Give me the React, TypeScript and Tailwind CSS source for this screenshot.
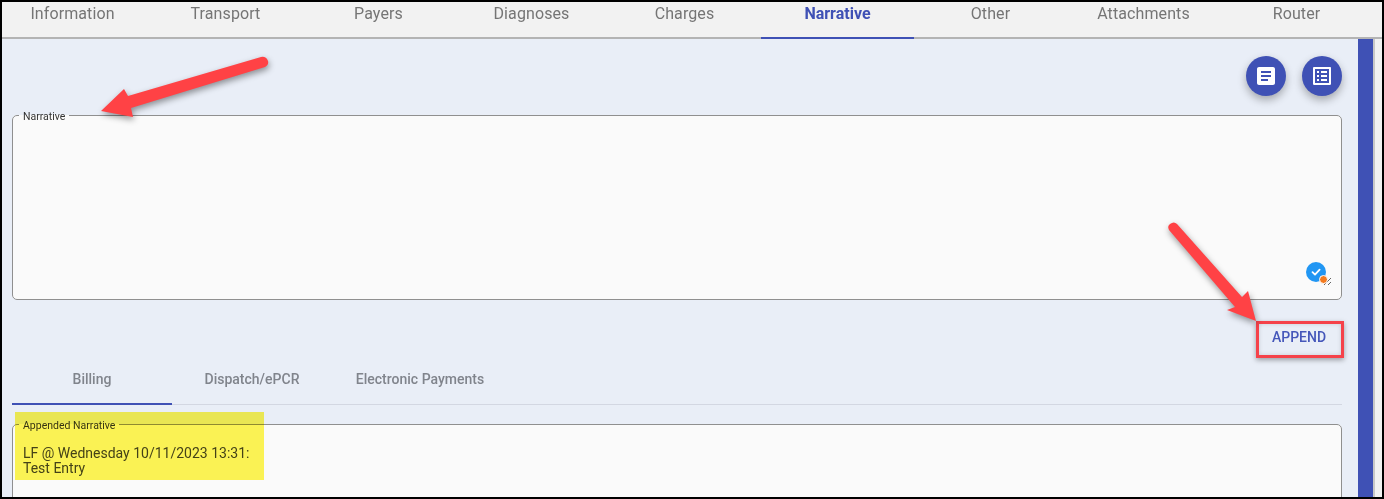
// App.tsx
import React from "react";
import { MdArticle, MdListAlt } from "react-icons/md";

const tabs = ["Information", "Transport", "Payers", "Diagnoses", "Charges", "Narrative", "Other", "Attachments", "Router"];

const App: React.FC = () => {
  return (
    <div className="relative flex h-[499px] w-[1384px] flex-col overflow-hidden border-2 border-black bg-[#f2f2f2] font-['Roboto',sans-serif]">
      {/* Top tabs */}
      <div className="flex h-[37px] shrink-0 border-b-2 border-[#b4b4b4] pr-[6px]">
        <div className="ml-[-6px] flex">
          {tabs.map((tab) => (
            <div
              key={tab}
              className={
                tab === "Narrative"
                  ? "-mb-[2px] flex h-[37px] w-[153px] justify-center border-b-2 border-[#3f51b5] pt-[2px] text-[16px] leading-[20px] font-bold text-[#3f51b5]"
                  : "flex h-[35px] w-[153px] justify-center pt-[2px] text-[16px] leading-[20px] tracking-[0.1px] text-[#757575]"
              }
            >
              {tab}
            </div>
          ))}
        </div>
      </div>

      <div className="flex min-h-0 flex-1">
        <div className="min-w-0 w-[1356px] bg-[#e9eef7] pr-[16px] pl-[10px]">
          {/* Action buttons */}
          <div className="flex justify-end gap-[16px] pt-[17px]">
            <button className="flex h-[40px] w-[40px] items-center justify-center rounded-full bg-[#3f51b5] text-white shadow-[0_4px_8px_rgba(0,0,0,0.3)]">
              <MdArticle size={24} />
            </button>
            <button className="flex h-[40px] w-[40px] items-center justify-center rounded-full bg-[#3f51b5] text-white shadow-[0_4px_8px_rgba(0,0,0,0.3)]">
              <MdListAlt size={24} />
            </button>
          </div>

          {/* Narrative field */}
          <fieldset className="relative mt-[11px] h-[193px] rounded-[5px] border border-[#8f8f8f] bg-[#fafafa] px-0">
            <legend className="ml-[6px] px-[4px] pt-[4px] text-[10.5px] leading-[12px] text-[#333333]">Narrative</legend>
            <textarea className="block h-[163px] w-[1319px] resize bg-transparent outline-none" aria-label="Narrative" />
            <span className="absolute right-[15px] bottom-[17px] flex h-[20px] w-[20px] items-center justify-center rounded-full bg-[#2196f3]">
              <svg width="12" height="12" viewBox="0 0 12 12" fill="none" stroke="#fff" strokeWidth="1.8" strokeLinecap="round" strokeLinejoin="round">
                <path d="M2.5 6.2 5 8.6 9.6 3.6" />
              </svg>
              <span className="absolute right-[-1.5px] bottom-[-1.5px] h-[9px] w-[9px] rounded-full border-[1.5px] border-white bg-[#f47b20]" />
            </span>
          </fieldset>

          {/* Append */}
          <div className="flex justify-end pt-[21px]">
            <button className="-mr-[2px] flex h-[37px] w-[88px] items-center justify-center border-[3px] border-[#f5424a] pr-[2px] pb-[5px] text-[14px] leading-none font-medium text-[#4557ba] shadow-[0_2px_5px_rgba(0,0,0,0.35),inset_0_0_4px_rgba(0,0,0,0.15)]">
              APPEND
            </button>
          </div>

          {/* Sub tabs */}
          <div className="flex h-[47px] border-b border-[#d3d7e2]">
            <div className="-mb-px flex h-[47px] w-[160px] justify-center border-b-2 border-[#3f51b5] pt-[11px] text-[14px] leading-[20px] font-medium text-[#80848c]">
              Billing
            </div>
            <div className="flex w-[160px] justify-center pt-[11px] text-[14px] leading-[20px] font-medium text-[#80848c]">
              Dispatch/ePCR
            </div>
            <div className="flex w-[176px] justify-center pt-[11px] text-[14px] leading-[20px] font-medium text-[#80848c]">
              Electronic Payments
            </div>
          </div>

          {/* Appended narrative */}
          <fieldset className="mt-[11px] h-[122px] rounded-[5px] border border-[#8f8f8f] bg-[#fafafa] px-0">
            <legend className="ml-[6px] px-[4px] pt-[4px] text-[10.5px] leading-[12px] text-[#333333]">Appended Narrative</legend>
            <div className="w-[240px] pt-[14px] pl-[10px] text-[14px] leading-[15px] text-[#444444]">
              LF @ Wednesday 10/11/2023 13:31:
              <br />
              Test Entry
            </div>
          </fieldset>
        </div>

        {/* Scrollbar */}
        <div className="w-[15px] shrink-0 bg-[#3f51b5]" />
        <div className="w-[2px] shrink-0 bg-[#c8c8c8]" />
        <div className="flex-1 bg-[#f2f2f2]" />
      </div>

      {/* Highlight */}
      <div className="pointer-events-none absolute top-[410px] left-[13px] h-[68px] w-[249px] bg-[#fff755] mix-blend-multiply" />

      {/* Annotation arrows */}
      <svg
        className="pointer-events-none absolute top-[-2px] left-[-2px] drop-shadow-[1px_3px_3px_rgba(0,0,0,0.4)]"
        width="1384"
        height="499"
        viewBox="0 0 1384 499"
        fill="#ff4245"
      >
        <path d="M261 57 128 96 124 89 101 111 133 117 131 108 265 67Q269 65 268 61 266 56 261 57Z" />
        <path d="M1169 230 1235 307 1227 310 1256 321 1248 291 1242 297 1177 224Q1174 221 1170 224 1167 226 1169 230Z" />
      </svg>
    </div>
  );
};

export default App;
